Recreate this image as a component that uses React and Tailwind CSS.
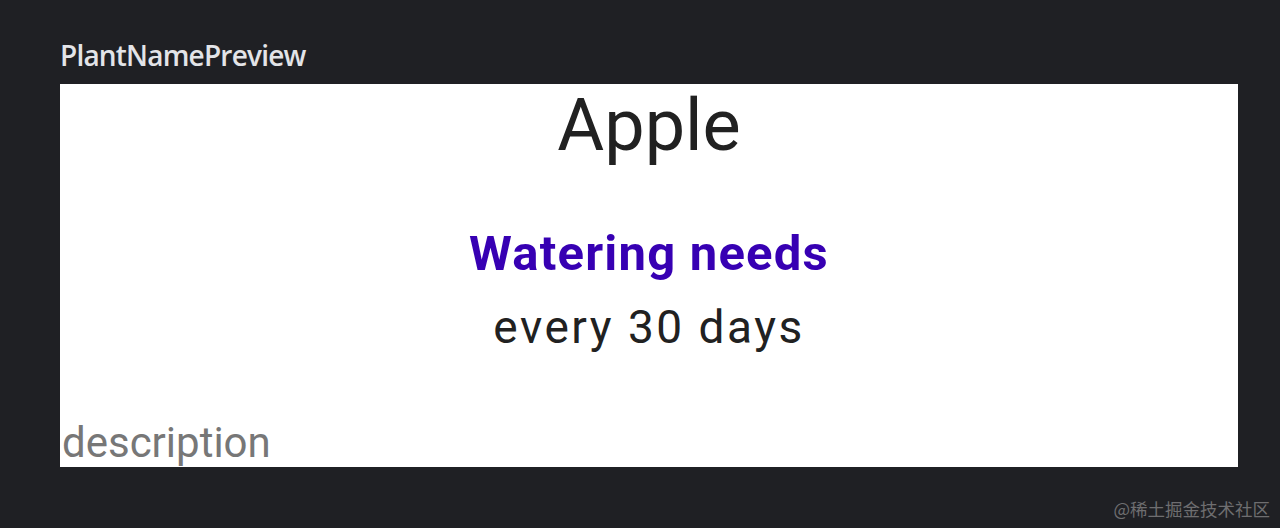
export default function App() {
  return (
    <div className="relative w-[1280px] h-[528px] bg-[#1f2024] overflow-hidden">
      <div className="pl-[60px] pt-[37px]">
        <div className="text-[28px] leading-[36px] text-[#e3e4e8] font-['Open_Sans',sans-serif] font-semibold tracking-[-0.8px]">
          PlantNamePreview
        </div>
        <div className="mt-[11px] w-[1178px] h-[383px] bg-white flex flex-col font-['Roboto',sans-serif]">
          <div className="text-center text-[72px] text-[#212121] leading-[84px]">Apple</div>
          <div className="mt-[58px] text-center text-[49px] leading-[56px] font-bold text-[#3700b3] tracking-[1.2px]">
            Watering needs
          </div>
          <div className="mt-[18px] text-center text-[46px] leading-[54px] text-[#212121] tracking-[2.5px]">
            every 30 days
          </div>
          <div className="mt-auto pl-[2px] text-[42px] leading-[48px] text-[#777777]">description</div>
        </div>
      </div>
      <div className="absolute right-[10px] bottom-[6px] text-[17.5px] text-[#6e6e70] font-['Noto_Sans_CJK_SC',sans-serif]">
        @稀土掘金技术社区
      </div>
    </div>
  );
}
